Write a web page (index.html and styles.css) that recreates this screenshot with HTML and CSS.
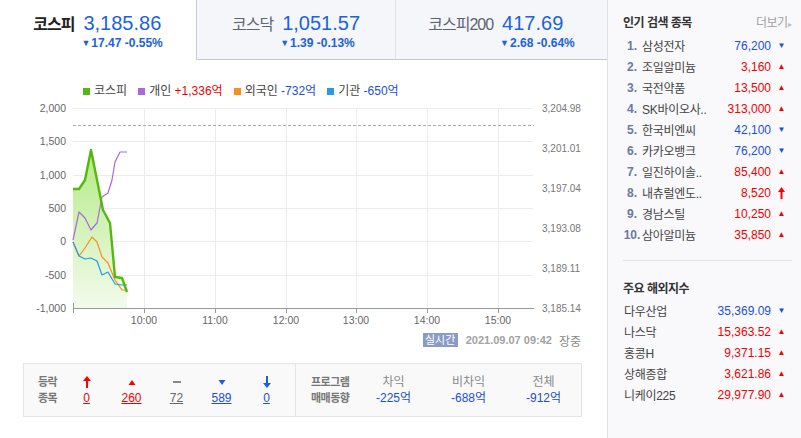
FILE: index.html
```html
<!DOCTYPE html>
<html lang="ko">
<head>
    <meta charset="UTF-8">
    <title>국내증시</title>
    <link rel="stylesheet" href="styles.css">
</head>
<body>
<div class="page">
    <main class="market">
        <div class="tabs">
            <div class="tab tab-on">
                <div class="tab-box">
                    <span class="tab-name">코스피</span>
                    <span class="tab-value">3,185.86</span>
                    <span class="tab-change"><i class="tri">▼</i>17.47 -0.55%</span>
                </div>
            </div>
            <div class="tab tab-mid">
                <div class="tab-box">
                    <span class="tab-name">코스닥</span>
                    <span class="tab-value">1,051.57</span>
                    <span class="tab-change"><i class="tri">▼</i>1.39 -0.13%</span>
                </div>
            </div>
            <div class="tab tab-last">
                <div class="tab-box">
                    <span class="tab-name">코스피200</span>
                    <span class="tab-value">417.69</span>
                    <span class="tab-change"><i class="tri">▼</i>2.68 -0.64%</span>
                </div>
            </div>
        </div>

        <div class="legend">
            <span class="key"><i class="swatch green"></i>코스피</span>
            <span class="key"><i class="swatch purple"></i>개인 <b class="up">+1,336억</b></span>
            <span class="key"><i class="swatch orange"></i>외국인 <b class="down">-732억</b></span>
            <span class="key"><i class="swatch blue"></i>기관 <b class="down">-650억</b></span>
        </div>

        <svg class="chart" width="607" height="228" viewBox="0 100 607 228">
            <defs>
                <linearGradient id="fillKospi" x1="0" y1="150" x2="0" y2="308" gradientUnits="userSpaceOnUse">
                    <stop offset="0" stop-color="#b4ea85"/>
                    <stop offset="1" stop-color="#f3fbec"/>
                </linearGradient>
            </defs>
            <!-- grid -->
            <g stroke="#ececec" stroke-width="1">
                <line x1="73" y1="108.5" x2="533" y2="108.5"/>
                <line x1="73" y1="141.5" x2="533" y2="141.5"/>
                <line x1="73" y1="175.5" x2="533" y2="175.5"/>
                <line x1="73" y1="208.5" x2="533" y2="208.5"/>
                <line x1="73" y1="241.5" x2="533" y2="241.5"/>
                <line x1="73" y1="275.5" x2="533" y2="275.5"/>
                <line x1="144.5" y1="108" x2="144.5" y2="308"/>
                <line x1="215.5" y1="108" x2="215.5" y2="308"/>
                <line x1="286.5" y1="108" x2="286.5" y2="308"/>
                <line x1="356.5" y1="108" x2="356.5" y2="308"/>
                <line x1="427.5" y1="108" x2="427.5" y2="308"/>
                <line x1="498.5" y1="108" x2="498.5" y2="308"/>
            </g>
            <line x1="73" y1="125.5" x2="534" y2="125.5" stroke="#aaa" stroke-dasharray="3 2"/>

            <!-- series -->
            <polygon fill="url(#fillKospi)" points="73,189 79,189 85,180 91,150 97,180 103,210 110,223 115,277 122,278 127,292 127,308 73,308"/>
            <g fill="none" stroke-width="1.2" stroke-linejoin="round">
                <polyline stroke="#a86ad6" points="73,240 79,212 85,218 91,230 97,223 102,197 108,193 112,180 115,162 120,152 127,152"/>
                <polyline stroke="#f4901e" points="73,242 79,256 85,248 92,237 97,242 102,257 108,263 115,280 122,290 127,290"/>
                <polyline stroke="#2898e8" points="73,242 79,256 85,259 91,258 97,261 102,275 108,272 115,284 122,285 127,285"/>
            </g>
            <polyline fill="none" stroke="#55b80e" stroke-width="2.4" stroke-linejoin="round" points="73,189 79,189 85,180 91,150 97,180 103,210 110,223 115,277 122,278 127,292"/>

            <!-- axis -->
            <g stroke="#999" stroke-width="1">
                <line x1="73" y1="308.5" x2="534" y2="308.5"/>
                <line x1="73.5" y1="303" x2="73.5" y2="313"/>
                <line x1="144.5" y1="308" x2="144.5" y2="313"/>
                <line x1="215.5" y1="308" x2="215.5" y2="313"/>
                <line x1="286.5" y1="308" x2="286.5" y2="313"/>
                <line x1="356.5" y1="308" x2="356.5" y2="313"/>
                <line x1="427.5" y1="308" x2="427.5" y2="313"/>
                <line x1="498.5" y1="308" x2="498.5" y2="313"/>
            </g>
            <g class="axis-left" text-anchor="end">
                <text x="66" y="112">2,000</text>
                <text x="66" y="145">1,500</text>
                <text x="66" y="179">1,000</text>
                <text x="66" y="212">500</text>
                <text x="66" y="245">0</text>
                <text x="66" y="279">-500</text>
                <text x="66" y="312">-1,000</text>
            </g>
            <g class="axis-right">
                <text x="542" y="112">3,204.98</text>
                <text x="542" y="152">3,201.01</text>
                <text x="542" y="192">3,197.04</text>
                <text x="542" y="232">3,193.08</text>
                <text x="542" y="272">3,189.11</text>
                <text x="542" y="312">3,185.14</text>
            </g>
            <g class="axis-time" text-anchor="middle">
                <text x="144" y="324">10:00</text>
                <text x="215" y="324">11:00</text>
                <text x="286" y="324">12:00</text>
                <text x="356" y="324">13:00</text>
                <text x="427" y="324">14:00</text>
                <text x="498" y="324">15:00</text>
            </g>
        </svg>

        <div class="stamp">
            <span class="badge">실시간</span>
            <span class="time">2021.09.07 09:42</span>
            <span class="state">장중</span>
        </div>

        <div class="stats">
            <div class="group updown">
                <div class="label">등락<br>종목</div>
                <div class="col">
                    <svg class="ico" width="8" height="12" viewBox="0 0 8 12"><polygon fill="#f00" points="4,0 8,5 5,5 5,12 3,12 3,5 0,5"/></svg>
                    <a class="num up">0</a>
                </div>
                <div class="col">
                    <svg class="ico" width="8" height="12" viewBox="0 0 8 12"><polygon fill="#f00" points="4,4 7.5,9 0.5,9"/></svg>
                    <a class="num up">260</a>
                </div>
                <div class="col">
                    <svg class="ico" width="8" height="12" viewBox="0 0 8 12"><rect fill="#888" x="0" y="5" width="8" height="2"/></svg>
                    <a class="num flat">72</a>
                </div>
                <div class="col">
                    <svg class="ico" width="8" height="12" viewBox="0 0 8 12"><polygon fill="#1a5ee0" points="0.5,4 7.5,4 4,9"/></svg>
                    <a class="num down">589</a>
                </div>
                <div class="col">
                    <svg class="ico" width="8" height="12" viewBox="0 0 8 12"><polygon fill="#1a5ee0" points="3,0 5,0 5,7 8,7 4,12 0,7 3,7"/></svg>
                    <a class="num down">0</a>
                </div>
            </div>
            <div class="group program">
                <div class="label">프로그램<br>매매동향</div>
                <div class="col wide">
                    <span class="head">차익</span>
                    <span class="val">-225억</span>
                </div>
                <div class="col wide">
                    <span class="head">비차익</span>
                    <span class="val">-688억</span>
                </div>
                <div class="col wide">
                    <span class="head">전체</span>
                    <span class="val">-912억</span>
                </div>
            </div>
        </div>
    </main>

    <aside class="side">
        <div class="side-head">
            <h2>인기 검색 종목</h2>
            <a class="more">더보기<i>▸</i></a>
        </div>
        <ol class="rank">
            <li><span class="no">1.</span><span class="name">삼성전자</span><span class="price down">76,200</span><span class="mark down">▼</span></li>
            <li><span class="no">2.</span><span class="name">조일알미늄</span><span class="price up">3,160</span><span class="mark up">▲</span></li>
            <li><span class="no">3.</span><span class="name">국전약품</span><span class="price up">13,500</span><span class="mark up">▲</span></li>
            <li><span class="no">4.</span><span class="name">SK바이오사..</span><span class="price up">313,000</span><span class="mark up">▲</span></li>
            <li><span class="no">5.</span><span class="name">한국비엔씨</span><span class="price down">42,100</span><span class="mark down">▼</span></li>
            <li><span class="no">6.</span><span class="name">카카오뱅크</span><span class="price down">76,200</span><span class="mark down">▼</span></li>
            <li><span class="no">7.</span><span class="name">일진하이솔..</span><span class="price up">85,400</span><span class="mark up">▲</span></li>
            <li><span class="no">8.</span><span class="name">내츄럴엔도..</span><span class="price up">8,520</span><span class="mark up"><svg width="7" height="12" viewBox="0 0 7 12"><polygon fill="#f00" points="3.5,0 7,5 4.5,5 4.5,12 2.5,12 2.5,5 0,5"/></svg></span></li>
            <li><span class="no">9.</span><span class="name">경남스틸</span><span class="price up">10,250</span><span class="mark up">▲</span></li>
            <li><span class="no">10.</span><span class="name">삼아알미늄</span><span class="price up">35,850</span><span class="mark up">▲</span></li>
        </ol>

        <div class="side-head world-head">
            <h2>주요 해외지수</h2>
        </div>
        <ul class="world">
            <li><span class="name">다우산업</span><span class="price down">35,369.09</span><span class="mark down">▼</span></li>
            <li><span class="name">나스닥</span><span class="price up">15,363.52</span><span class="mark up">▲</span></li>
            <li><span class="name">홍콩H</span><span class="price up">9,371.15</span><span class="mark up">▲</span></li>
            <li><span class="name">상해종합</span><span class="price up">3,621.86</span><span class="mark up">▲</span></li>
            <li><span class="name">니케이225</span><span class="price up">29,977.90</span><span class="mark up">▲</span></li>
        </ul>
    </aside>
</div>
</body>
</html>
```

FILE: styles.css
```css
body {
    margin: 0;
    font-family: "Liberation Sans", "Noto Sans CJK KR", sans-serif;
    font-size: 12px;
    color: #333;
    background: #fff;
}

.page {
    display: flex;
    width: 801px;
    height: 438px;
    overflow: hidden;
}

/* main column */

.market {
    width: 607px;
    flex: none;
}

.tabs {
    display: flex;
    height: 60px;
}

.tab {
    display: flex;
    justify-content: center;
    padding-top: 11px;
    box-sizing: border-box;
    height: 60px;
}

.tab-on {
    width: 196px;
}

.tab-mid {
    width: 199px;
    background: #f5f6f9;
    border-left: 1px solid #c5c9d3;
    border-bottom: 1px solid #c5c9d3;
}

.tab-last {
    width: 212px;
    background: #f5f6f9;
    border-left: 1px solid #e0e2e7;
    border-bottom: 1px solid #c5c9d3;
}

.tab-box {
    display: grid;
    grid-template-columns: auto auto;
    column-gap: 9px;
    align-items: baseline;
    align-self: flex-start;
}

.tab-name {
    font-size: 16px;
    letter-spacing: -1px;
    color: #5f6472;
}

.tab-on .tab-name {
    font-weight: bold;
    color: #222;
}

.tab-value {
    font-size: 20px;
    line-height: 22px;
    color: #1a62e0;
}

.tab-change {
    grid-column: 2;
    font-size: 12px;
    font-weight: bold;
    line-height: 16px;
    color: #1a62e0;
}

.tri {
    font-style: normal;
    font-size: 9px;
    margin-right: 1px;
    margin-left: -2px;
    vertical-align: 1px;
}

/* legend */

.legend {
    display: flex;
    gap: 11px;
    height: 40px;
    box-sizing: border-box;
    padding: 22px 0 0 83px;
    line-height: 14px;
}

.key {
    display: flex;
    align-items: center;
    white-space: pre;
    color: #444;
}

.swatch {
    width: 7px;
    height: 7px;
    margin-right: 4px;
}

.green { background: #55b80e; }
.purple { background: #a86ad6; }
.orange { background: #f4901e; }
.blue { background: #2898e8; }

.legend b {
    font-weight: normal;
}

.up { color: #f00000; }
.down { color: #1a4fd8; }
.flat { color: #666; }

/* chart */

.chart {
    display: block;
}

.chart text {
    font-family: "Liberation Sans", sans-serif;
    font-size: 10.5px;
    fill: #666;
}

.chart .axis-right text {
    font-size: 10px;
    fill: #777;
}

.stamp {
    display: flex;
    justify-content: flex-end;
    align-items: center;
    gap: 8px;
    height: 14px;
    margin-top: 5px;
    padding-right: 26px;
}

.badge {
    width: 35px;
    height: 14px;
    line-height: 14px;
    text-align: center;
    background: #8a9bc9;
    color: #fff;
    font-size: 11px;
}

.time {
    font-size: 11px;
    font-weight: bold;
    color: #a2a2a2;
}

.state {
    color: #888;
    margin-left: -1px;
}

/* up/down and program stats */

.stats {
    display: flex;
    width: 559px;
    height: 54px;
    box-sizing: border-box;
    margin: 16px 0 0 23px;
    border: 1px solid #e5e5e5;
    background: #f9f9f9;
}

.group {
    display: flex;
    align-items: center;
}

.updown {
    width: 267px;
    padding-left: 14px;
    border-right: 1px solid #e5e5e5;
}

.program {
    padding-left: 15px;
}

.label {
    font-size: 11px;
    font-weight: bold;
    line-height: 16px;
    color: #777;
    letter-spacing: -0.5px;
}

.updown .label {
    width: 26px;
}

.program .label {
    width: 45px;
}

.col {
    display: flex;
    flex-direction: column;
    align-items: center;
    width: 45px;
    line-height: 16px;
}

.col.wide {
    width: 75px;
}

.ico {
    display: block;
    margin: 2px 0;
}

.num {
    text-decoration: underline;
}

.head {
    color: #888;
}

.val {
    color: #1a4fd8;
}

/* side panel */

.side {
    width: 194px;
    flex: none;
    box-sizing: border-box;
    border-left: 1px solid #e1e1e1;
    background: #f9f9fb;
    padding: 13px 9px 0 15px;
}

.side-head {
    display: flex;
    justify-content: space-between;
    align-items: center;
    height: 16px;
}

.side h2 {
    margin: 0;
    font-size: 12px;
    font-weight: bold;
    letter-spacing: -0.5px;
    color: #333;
}

.more {
    color: #a0a0a0;
    letter-spacing: -0.5px;
    margin-right: 1px;
}

.more i {
    font-style: normal;
    font-size: 8px;
    color: #bbb;
}

.rank, .world {
    list-style: none;
    margin: 6px 0 0;
    padding: 0;
}

.rank li, .world li {
    display: flex;
    align-items: center;
    height: 21px;
}

.no {
    width: 18px;
    text-align: center;
    font-weight: bold;
    color: #6c78a0;
}

.name {
    flex: 1;
    font-size: 12px;
    color: #444;
    letter-spacing: -0.3px;
}

.rank .name {
    margin-left: 1px;
}

.price {
    text-align: right;
}

.mark {
    width: 21px;
    text-align: center;
    font-size: 8px;
}

.mark svg {
    display: block;
    margin: 0 auto;
}

.world-head {
    margin-top: 15px;
    padding-top: 18px;
    border-top: 1px solid #e1e3ea;
}

.world {
    margin-top: 5px;
}

.world .name {
    margin-left: 1px;
}
```
